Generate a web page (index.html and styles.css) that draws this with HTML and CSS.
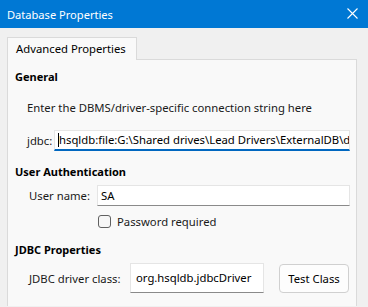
FILE: index.html
```html
<!DOCTYPE html>
<html lang="en">
<head>
  <meta charset="UTF-8">
  <title>Database Properties</title>
  <link rel="stylesheet" href="styles.css">
</head>
<body>
  <div class="titlebar">
    <span class="title">Database Properties</span>
    <svg class="close" width="11" height="11" viewBox="0 0 11 11">
      <path d="M0.5 0.5 L10.5 10.5 M10.5 0.5 L0.5 10.5" stroke="#ffffff" stroke-width="1.1" fill="none"/>
    </svg>
  </div>

  <div class="dialog">
    <div class="tabs">
      <div class="tab">Advanced Properties</div>
    </div>

    <div class="panel">
      <div class="heading first">General</div>
      <div class="desc">Enter the DBMS/driver-specific connection string here</div>
      <div class="row jdbc-row">
        <span class="label jdbc-label">jdbc:</span>
        <div class="field focused"><span class="caret"></span>hsqldb:file:G:\Shared drives\Lead Drivers\ExternalDB\database</div>
      </div>

      <div class="heading">User Authentication</div>
      <div class="row user-row">
        <span class="label user-label">User name:</span>
        <div class="field">SA</div>
      </div>
      <div class="row check-row">
        <span class="checkbox"></span>
        <span>Password required</span>
      </div>

      <div class="heading">JDBC Properties</div>
      <div class="row driver-row">
        <span class="label user-label driver-label">JDBC driver class:</span>
        <div class="field driver-field">org.hsqldb.jdbcDriver</div>
        <button class="btn">Test Class</button>
      </div>
    </div>
  </div>
</body>
</html>
```

FILE: styles.css
```css
body {
  margin: 0;
  background: #f0f0f0;
  font-family: 'Noto Sans', sans-serif;
  font-size: 11.3px;
  color: #1a1a1a;
  height: 307px;
  overflow: hidden;
}

.titlebar {
  height: 28px;
  background: #0078d4;
  color: #ffffff;
  display: flex;
  align-items: center;
  justify-content: space-between;
  padding: 0 10px 0 7px;
}

.title {
  font-size: 11.1px;
}

.close {
  margin-top: -1px;
}

.dialog {
  padding: 9px 11px 0 7px;
}

.tabs {
  display: flex;
}

.tab {
  width: 120px;
  height: 22px;
  line-height: 22px;
  padding-left: 8px;
  background: #f9f9f9;
  border: 1px solid #dadada;
  border-bottom: none;
  margin-bottom: -1px;
  position: relative;
  z-index: 1;
  color: #000000;
}

.panel {
  background: #f9f9f9;
  border: 1px solid #dadada;
  border-bottom: none;
  height: 237px;
  padding: 9px 6px 0 7px;
}

.heading {
  font-weight: bold;
  font-size: 11px;
  line-height: 16px;
  margin-top: 13px;
  color: #000000;
}

.heading.first {
  margin-top: 0;
}

.desc {
  line-height: 16px;
  margin-top: 15px;
  padding-left: 12px;
}

.row {
  display: flex;
  align-items: center;
}

.jdbc-row {
  margin-top: 14px;
  padding-left: 12px;
}

.label {
  flex: none;
}

.jdbc-label {
  width: 27px;
}

.user-label {
  width: 68px;
}

.user-row,
.driver-row {
  margin-top: 5px;
  padding-left: 14px;
}

.field {
  flex: 1;
  height: 21px;
  line-height: 19px;
  background: #ffffff;
  border: 1px solid #e5e5e5;
  border-bottom-color: #8a8a8a;
  padding-left: 3px;
  white-space: nowrap;
  overflow: hidden;
  color: #000000;
  box-sizing: border-box;
}

.field.focused {
  border-bottom: 2px solid #0067c0;
  line-height: 18px;
}

.caret {
  display: inline-block;
  width: 1px;
  height: 14px;
  background: #000000;
  vertical-align: -3px;
}

.check-row {
  margin-top: 7px;
  height: 16px;
  padding-left: 83px;
}

.checkbox {
  width: 11px;
  height: 11px;
  border: 1px solid #606060;
  border-radius: 3px;
  background: #f6f6f6;
  margin-right: 6px;
}

.driver-row {
  margin-top: 5px;
}

.driver-label {
  width: 101px;
}

.driver-field {
  flex: none;
  width: 134px;
  height: 30px;
  line-height: 28px;
  padding-left: 5px;
}

.btn {
  margin-left: 15px;
  width: 70px;
  height: 29px;
  background: #fdfdfd;
  border: 1px solid #d0d0d0;
  border-radius: 4px;
  font-family: 'Noto Sans', sans-serif;
  font-size: 11.3px;
  color: #000000;
  padding: 0;
}
```
